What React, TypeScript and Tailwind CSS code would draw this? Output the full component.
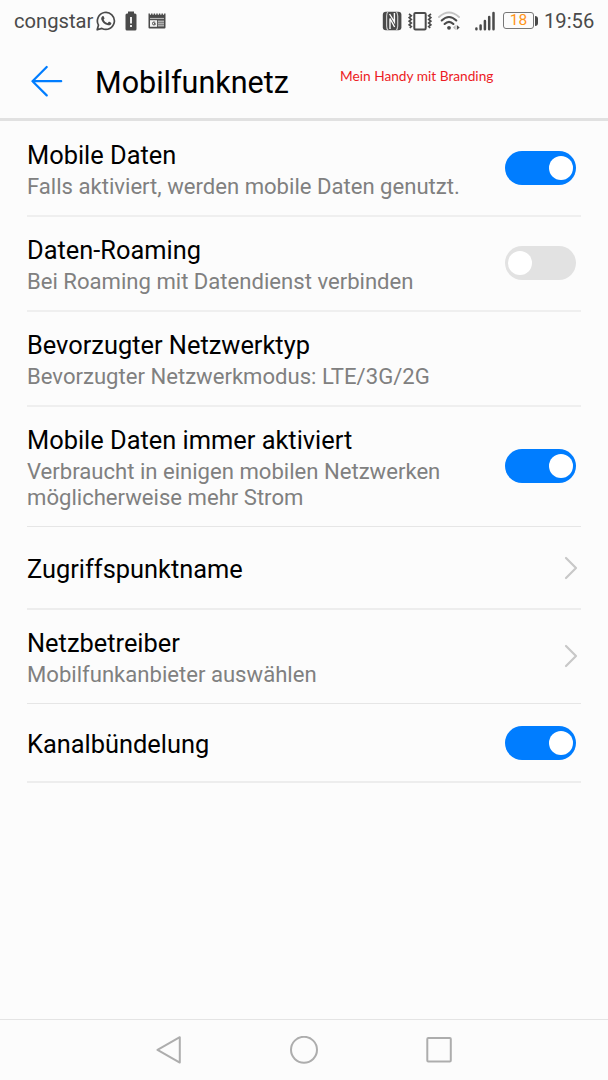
import { useState } from "react";
import clsx from "clsx";

interface ISetting {
  title: string;
  subtitle?: string;
  control?: "switch" | "link";
  enabled?: boolean;
  rowClass: string;
}

const settings: ISetting[] = [
  {
    title: "Mobile Daten",
    subtitle: "Falls aktiviert, werden mobile Daten genutzt.",
    control: "switch",
    enabled: true,
    rowClass: "h-24 border-b-2 border-[#efefef]",
  },
  {
    title: "Daten-Roaming",
    subtitle: "Bei Roaming mit Datendienst verbinden",
    control: "switch",
    enabled: false,
    rowClass: "h-[95px] border-b-2 border-[#efefef] pb-px",
  },
  {
    title: "Bevorzugter Netzwerktyp",
    subtitle: "Bevorzugter Netzwerkmodus: LTE/3G/2G",
    rowClass: "h-[95px] border-b-2 border-[#efefef] pb-px",
  },
  {
    title: "Mobile Daten immer aktiviert",
    subtitle: "Verbraucht in einigen mobilen Netzwerken möglicherweise mehr Strom",
    control: "switch",
    enabled: true,
    rowClass: "h-[120px] border-b border-[#e6e6e6] pb-px",
  },
  {
    title: "Zugriffspunktname",
    control: "link",
    rowClass: "h-[83px] border-b-2 border-[#ededed]",
  },
  {
    title: "Netzbetreiber",
    subtitle: "Mobilfunkanbieter auswählen",
    control: "link",
    rowClass: "h-[94px] border-b border-[#e6e6e6] pb-px",
  },
  {
    title: "Kanalbündelung",
    control: "switch",
    enabled: true,
    rowClass: "h-[79px] border-b-2 border-[#ededed]",
  },
];

const WhatsAppIcon = () => (
  <svg className="h-5 w-5" viewBox="0 0 20 20" fill="none">
    <path
      d="M1.2 18.8l1.3-4.7a8.5 8.5 0 1 1 3.4 3.3z"
      stroke="#4a4a4a"
      strokeWidth="1.7"
      strokeLinejoin="round"
    />
    <path
      d="M6.2 5.4c.5-.5 1.2-.5 1.5.1l.8 1.8c.1.4-.6 1.1-.8 1.4.9 1.8 2 2.7 3.8 3.5l1.1-1.3c.3-.3.6-.2.9-.1l1.6.9c.5.3.2 1.3-.2 1.8-.8.9-2.2 1.1-3.6.6-3.1-1.1-5.2-3.2-6-5.7-.3-1.2.1-2.3.9-3z"
      fill="#4a4a4a"
    />
  </svg>
);

const BatteryAlertIcon = () => (
  <svg className="h-5 w-3" viewBox="0 0 12 20">
    <path d="M3 .5h6v2h1q1.5 0 1.5 1.5v14q0 1.5-1.5 1.5h-8q-1.5 0-1.5-1.5v-14q0-1.5 1.5-1.5h1z" fill="#4a4a4a" />
    <path d="M5.1 6h1.8v6.5h-1.8zM5.1 14h1.8v2h-1.8z" fill="#fcfcfc" />
  </svg>
);

const NewsIcon = () => (
  <svg className="h-4 w-[18px]" viewBox="0 0 18 16">
    <path d="M.5.5h17v14q0 1-1 1h-15q-1 0-1-1z" fill="#4a4a4a" />
    <path d="M2.5 0v1.7M5.1 0v1.7M7.7 0v1.7M10.3 0v1.7M12.9 0v1.7M15.5 0v1.7" stroke="#fcfcfc" strokeWidth="1.2" />
    <path d="M2 5.5h14" stroke="#b5b5b5" strokeWidth="1.2" />
    <path d="M9.8 7.5h6.2v6h-6.2z" fill="#b0b0b0" />
    <path d="M9.8 9.5h6.2M9.8 11.5h6.2" stroke="#777" strokeWidth=".8" />
    <path d="M2 7.2h7v6.6h-7z" fill="#f2f2f2" />
    <path d="M7.2 9.2q-2.7-1-2.7 1.3t2.7 1.2v-1.3h-1.2" fill="none" stroke="#4a4a4a" strokeWidth="1" />
  </svg>
);

const NfcIcon = () => (
  <svg className="h-5 w-5" viewBox="0 0 20 20" fill="none">
    <rect x=".8" y=".7" width="18.6" height="18.6" rx="3" fill="#4a4a4a" />
    <path d="M6 .7Q4.6 2.2 4.6 5v10q0 2.8 1.5 4.3" stroke="#c8c8c8" strokeWidth="1.2" />
    <path d="M8 18V7.5l4.6 8.5" stroke="#fcfcfc" strokeWidth="1.4" />
    <path d="M7.6 3l4.8 8V2" stroke="#fcfcfc" strokeWidth="1.4" />
    <path d="M14.2.7q1.5 1.5 1.5 4.3v10q0 2.8-1.500 4.3" stroke="#c8c8c8" strokeWidth="1.2" />
  </svg>
);

const VibrateIcon = () => (
  <svg className="h-5 w-6" viewBox="0 0 24 20" fill="none" stroke="#4a4a4a">
    <rect x="6.3" y="1.9" width="11.4" height="16.6" rx="1.2" strokeWidth="2" />
    <path
      d="M1 3l2.3 1.8-2.1 1.8 2.1 1.8-2.1 1.8 2.1 1.8-2.1 1.8 2.1 1.8-1.5 1.4M23 3l-2.3 1.8 2.1 1.8-2.1 1.8 2.1 1.8-2.1 1.8 2.1 1.8-2.1 1.8 1.5 1.4"
      strokeWidth="1.7"
    />
  </svg>
);

const WifiIcon = () => (
  <svg className="h-5 w-[23px]" viewBox="0 0 23 20" fill="none" strokeLinecap="round">
    <path d="M1 6Q11 -3 21 6" stroke="#c4c4c4" strokeWidth="1.9" />
    <path d="M3.7 9.5Q11 2.5 18.3 9.5M6.6 13Q11 8.7 15.4 13" stroke="#4a4a4a" strokeWidth="2.1" />
    <circle cx="11" cy="16.8" r="1.9" fill="#4a4a4a" />
    <path d="M17.6 14v5L15 16.5z" fill="#bbb" />
    <path d="M18.8 14v5l2.9-2.5z" fill="#4a4a4a" />
  </svg>
);

const SignalIcon = () => (
  <svg className="h-5 w-5" viewBox="0 0 20 20" stroke="#4a4a4a" strokeWidth="2.5" strokeLinecap="round">
    <path d="M1.4 17.5v.8M5.6 14.5v3.8M9.9 10v8.3M14.2 6v12.3M18.5 2v16.3" />
  </svg>
);

const StatusBar = () => (
  <div className="flex h-11 items-center pl-[14px] pb-[3px] text-[#4a4a4a]">
    <span className="w-[82px] whitespace-nowrap text-[20.2px] leading-6">congstar</span>
    <WhatsAppIcon />
    <div className="ml-[9px]"><BatteryAlertIcon /></div>
    <div className="ml-[11px]"><NewsIcon /></div>
    <div className="ml-[216px]"><NfcIcon /></div>
    <div className="ml-1.5"><VibrateIcon /></div>
    <div className="ml-1.5"><WifiIcon /></div>
    <div className="ml-[14px]"><SignalIcon /></div>
    <div className="ml-2 flex items-center">
      <div className="flex h-[17px] w-[31px] items-center justify-center rounded-[3px] border border-[#777] text-[15.5px] leading-none text-[#ff9419]">
        18
      </div>
      <div className="ml-px h-2.5 w-[3px] rounded-r-sm bg-[#4a4a4a]" />
    </div>
    <span className="ml-[6px] whitespace-nowrap text-[20.2px] leading-6">19:56</span>
  </div>
);

const Header = () => (
  <header className="flex h-[77px] border-b-[3px] border-[#e1e1e1]">
    <svg className="mt-[21px] ml-[31px] h-8 w-8" viewBox="0 0 32 32" fill="none" stroke="#007dff" strokeWidth="2.2" strokeLinecap="round" strokeLinejoin="round">
      <path d="M15.7 2L1.5 16.2 15.7 30.4M1.5 16.2h28.7" />
    </svg>
    <h1 className="mt-[21px] ml-8 w-[245px] text-[30.5px] leading-9 text-black">Mobilfunknetz</h1>
    <p className="mt-[22px] whitespace-nowrap font-['Lato','Liberation_Sans',sans-serif] text-[13.7px] leading-5 text-[#ed1c24]">
      Mein Handy mit Branding
    </p>
  </header>
);

const Switch = ({ initial, label }: { initial: boolean; label: string }) => {
  const [on, setOn] = useState(initial);

  return (
    <button
      type="button"
      role="switch"
      aria-checked={on}
      aria-label={label}
      onClick={() => setOn(!on)}
      className={clsx(
        "mr-[5px] flex h-[34px] w-[71px] shrink-0 items-center rounded-full px-[3px]",
        on ? "justify-end bg-[#007dff]" : "justify-start bg-[#e2e2e2]",
      )}
    >
      <span className="h-6 w-6 rounded-full bg-white" />
    </button>
  );
};

const SettingRow = ({ title, subtitle, control, enabled, rowClass }: ISetting) => (
  <li className={clsx("flex items-center justify-between", rowClass)}>
    <div className={subtitle ? "pt-px" : "pt-[3px]"}>
      <h2 className="text-[25.4px] leading-[34px] text-black">{title}</h2>
      {subtitle && <p className="mt-px max-w-[440px] text-[22.1px] leading-[26px] text-[#808080]">{subtitle}</p>}
    </div>
    {control === "switch" && <Switch initial={!!enabled} label={title} />}
    {control === "link" && (
      <svg className="mr-[3px] h-6 w-[14px]" viewBox="0 0 14 24" fill="none" stroke="#c8c8c8" strokeWidth="2.2" strokeLinecap="round" strokeLinejoin="round">
        <path d="M2 2l10 10L2 22" />
      </svg>
    )}
  </li>
);

const NavigationBar = () => (
  <nav className="flex h-[61px] items-center justify-center gap-[107px] border-t border-[#e4e4e4]">
    <svg className="h-7 w-7" viewBox="0 0 28 28" fill="none" stroke="#adadad" strokeWidth="2" strokeLinejoin="round">
      <path d="M24.8 1.2v25.4L2.5 13.8z" />
    </svg>
    <svg className="h-7 w-7" viewBox="0 0 28 28" fill="none" stroke="#adadad" strokeWidth="2">
      <circle cx="14" cy="13.8" r="13" />
    </svg>
    <svg className="h-7 w-7" viewBox="0 0 28 28" fill="none" stroke="#adadad" strokeWidth="2">
      <rect x="2.3" y="2" width="23.5" height="23.5" rx="1" />
    </svg>
  </nav>
);

const App = () => (
  <div className="flex h-[1080px] w-[608px] flex-col overflow-hidden bg-[#fcfcfc] font-['Roboto','Liberation_Sans',sans-serif]">
    <StatusBar />
    <Header />
    <ul className="ml-[27px] w-[554px] grow">
      {settings.map((setting) => (
        <SettingRow key={setting.title} {...setting} />
      ))}
    </ul>
    <NavigationBar />
  </div>
);

export default App;
